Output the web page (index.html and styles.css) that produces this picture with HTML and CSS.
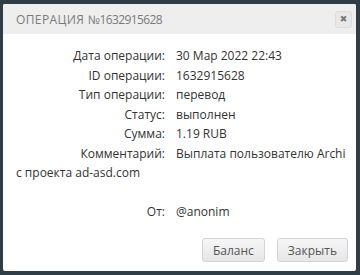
FILE: index.html
```html
<!DOCTYPE html>
<html>
<head>
<meta charset="utf-8">
<link rel="stylesheet" href="styles.css">
</head>
<body>
<div class="dialog">
  <div class="header">
    <span class="title">Операция <span class="num">№1632915628</span></span>
    <span class="close">✖</span>
  </div>
  <div class="content">
    <span class="label">Дата операции:</span>30 Мар 2022 22:43<br>
    <span class="label">ID операции:</span>1632915628<br>
    <span class="label">Тип операции:</span>перевод<br>
    <span class="label">Статус:</span>выполнен<br>
    <span class="label">Сумма:</span>1.19 RUB<br>
    <span class="label">Комментарий:</span>Выплата пользователю Archi<br>
    с проекта ad-asd.com<br>
    <br>
    <span class="label">От:</span>@anonim
  </div>
  <div class="footer">
    <button class="btn">Баланс</button>
    <button class="btn">Закрыть</button>
  </div>
</div>
</body>
</html>
```
FILE: styles.css
```css
html, body {
  margin: 0;
  background: #2f3e46;
}
body {
  padding: 4px 4px 4px 3px;
  font-family: "Open Sans", sans-serif;
}
.dialog {
  width: 353px;
  height: 267px;
  background: #fff;
  border-radius: 2px;
  display: flex;
  flex-direction: column;
}
.header {
  height: 30px;
  background: #eeeeee;
  display: flex;
  align-items: center;
  justify-content: space-between;
  padding: 0 4px 0 13px;
  border-radius: 2px 2px 0 0;
}
.title {
  text-transform: uppercase;
  color: #7a7a7a;
  font-size: 12px;
  letter-spacing: 0.4px;
}
.num {
  letter-spacing: -0.6px;
}
.close {
  width: 15px;
  height: 15px;
  border: 1px solid #dcdcdc;
  border-radius: 3px;
  background: #e8e8e8;
  color: #777;
  font-size: 9px;
  display: flex;
  align-items: center;
  justify-content: center;
  font-family: "DejaVu Sans", sans-serif;
}
.content {
  padding: 12px 10px 0 13px;
  font-size: 12px;
  line-height: 19.5px;
  color: #333;
  flex: 1;
}
.label {
  display: inline-block;
  width: 149px;
  text-align: right;
  margin-right: 11px;
}
.footer {
  display: flex;
  justify-content: flex-end;
  gap: 12px;
  padding: 0 8px 9px 0;
}
.btn {
  height: 24px;
  padding: 0 10px;
  font-family: "Open Sans", sans-serif;
  font-size: 12px;
  color: #555;
  border: 1px solid #d4d4d4;
  border-radius: 3px;
  background: linear-gradient(#f6f6f6, #e6e6e6);
}
```
